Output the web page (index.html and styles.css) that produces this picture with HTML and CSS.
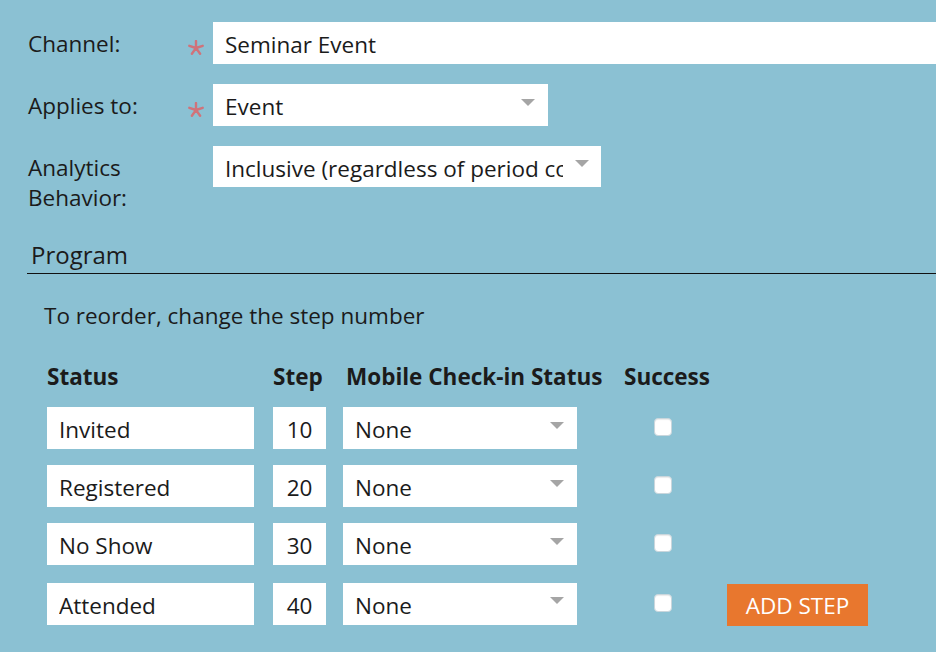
FILE: index.html
```html
<!DOCTYPE html>
<html lang="en">
<head>
<meta charset="utf-8">
<title>Program Settings</title>
<link rel="stylesheet" href="styles.css">
</head>
<body>
<div class="page">
  <div class="fields">
    <div class="field">
      <div class="label">Channel:</div>
      <div class="req"><svg class="req-icon" viewBox="0 0 16 16" width="16" height="16" aria-hidden="true"><path d="M8 8V1M8 8L14.7 5.8M8 8L12.1 13.7M8 8L3.9 13.7M8 8L1.3 5.8" stroke="#d0737a" stroke-width="2.4" stroke-linecap="round" fill="none"/></svg></div>
      <div class="box box-wide"><span class="val">Seminar Event</span></div>
    </div>
    <div class="field">
      <div class="label">Applies to:</div>
      <div class="req"><svg class="req-icon" viewBox="0 0 16 16" width="16" height="16" aria-hidden="true"><path d="M8 8V1M8 8L14.7 5.8M8 8L12.1 13.7M8 8L3.9 13.7M8 8L1.3 5.8" stroke="#d0737a" stroke-width="2.4" stroke-linecap="round" fill="none"/></svg></div>
      <div class="box select applies"><span class="val">Event</span><span class="caret"></span></div>
    </div>
    <div class="field">
      <div class="label">Analytics<br>Behavior:</div>
      <div class="req"></div>
      <div class="box select analytics"><span class="val">Inclusive (regardless of period cost)</span><span class="caret"></span></div>
    </div>
  </div>

  <div class="section-title">Program</div>

  <div class="hint">To reorder, change the step number</div>

  <div class="steps">
    <div class="th">Status</div>
    <div class="th">Step</div>
    <div class="th th-mobile">Mobile Check-in Status</div>
    <div class="th">Success</div>
    <div class="th"></div>

    <div class="box status"><span class="val">Invited</span></div>
    <div class="box step"><span class="val">10</span></div>
    <div class="box select mobile"><span class="val">None</span><span class="caret"></span></div>
    <div class="check-cell"><span class="check"></span></div>
    <div></div>

    <div class="box status"><span class="val">Registered</span></div>
    <div class="box step"><span class="val">20</span></div>
    <div class="box select mobile"><span class="val">None</span><span class="caret"></span></div>
    <div class="check-cell"><span class="check"></span></div>
    <div></div>

    <div class="box status"><span class="val">No Show</span></div>
    <div class="box step"><span class="val">30</span></div>
    <div class="box select mobile"><span class="val">None</span><span class="caret"></span></div>
    <div class="check-cell"><span class="check"></span></div>
    <div></div>

    <div class="box status"><span class="val">Attended</span></div>
    <div class="box step"><span class="val">40</span></div>
    <div class="box select mobile"><span class="val">None</span><span class="caret"></span></div>
    <div class="check-cell"><span class="check"></span></div>
    <button class="add-step">ADD STEP</button>
  </div>
</div>
</body>
</html>
```

FILE: styles.css
```css
* { box-sizing: border-box; }

html, body {
  margin: 0;
  padding: 0;
  background: #8bc1d3;
  overflow: hidden;
}

body {
  font-family: "Open Sans", "Noto Sans", sans-serif;
  font-size: 22.5px;
  color: #1b1b1b;
  width: 936px;
  height: 652px;
}

.page {
  padding: 22px 0 0 27px;
}

.fields {
  display: flex;
  flex-direction: column;
  gap: 20px;
  padding-left: 1px;
}

.field {
  display: grid;
  grid-template-columns: 159px 26px 1fr;
  align-items: start;
}

.label {
  line-height: 30px;
  padding-top: 7px;
}

.req {
  height: 42px;
  padding: 18px 0 0 1px;
}

.req-icon {
  display: block;
}

.box {
  background: #fff;
  height: 42px;
  padding: 0 12px;
  white-space: nowrap;
  display: flex;
  align-items: flex-start;
}

.box .val {
  display: block;
  line-height: 38px;
  padding-top: 4px;
  overflow: hidden;
  white-space: nowrap;
  flex: 1;
  min-width: 0;
}

.box-wide {
  margin-right: -10px;
}

.select {
  align-items: center;
  justify-content: space-between;
}

.caret {
  width: 0;
  height: 0;
  border-left: 7px solid transparent;
  border-right: 7px solid transparent;
  border-top: 7px solid #a5a5a5;
  margin-top: -6px;
  flex: none;
}

.applies {
  width: 335px;
  padding-right: 13px;
}

.analytics {
  width: 388px;
  height: 41px;
  padding-right: 12px;
}

.analytics .val {
  margin-right: 12px;
}

.section-title {
  margin-top: 27px;
  font-size: 24px;
  line-height: 30px;
  padding: 0 0 3px 4px;
  border-bottom: 1.5px solid #111;
  margin-right: -10px;
}

.hint {
  margin-top: 27px;
  margin-left: 17px;
  line-height: 30px;
}

.steps {
  margin-top: 31px;
  margin-left: 20px;
  display: grid;
  grid-template-columns: 226px 70px 281px 103px 141px;
  row-gap: 16px;
  align-items: center;
}

.th {
  font-weight: 700;
  line-height: 30px;
  margin-bottom: -1px;
  white-space: nowrap;
}

.th-mobile {
  padding-left: 3px;
}

.status { width: 207px; }
.step { width: 53px; padding: 0; }
.step .val { text-align: center; }
.mobile { width: 234px; padding-right: 13px; }

.check-cell {
  padding-left: 30px;
  height: 42px;
  display: flex;
  align-items: center;
}

.check {
  display: block;
  width: 18px;
  height: 18px;
  background: #fff;
  border-radius: 4px;
  border: 1px solid #c9d6dc;
  box-shadow: inset 0 1px 1px rgba(0,0,0,0.08);
  margin-top: -2px;
}

.add-step {
  font-family: inherit;
  font-size: 22.5px;
  color: #fff;
  background: #e8772e;
  border: none;
  height: 42px;
  width: 141px;
  padding: 0;
  margin: 3px 0 0 0;
  cursor: pointer;
}
```
